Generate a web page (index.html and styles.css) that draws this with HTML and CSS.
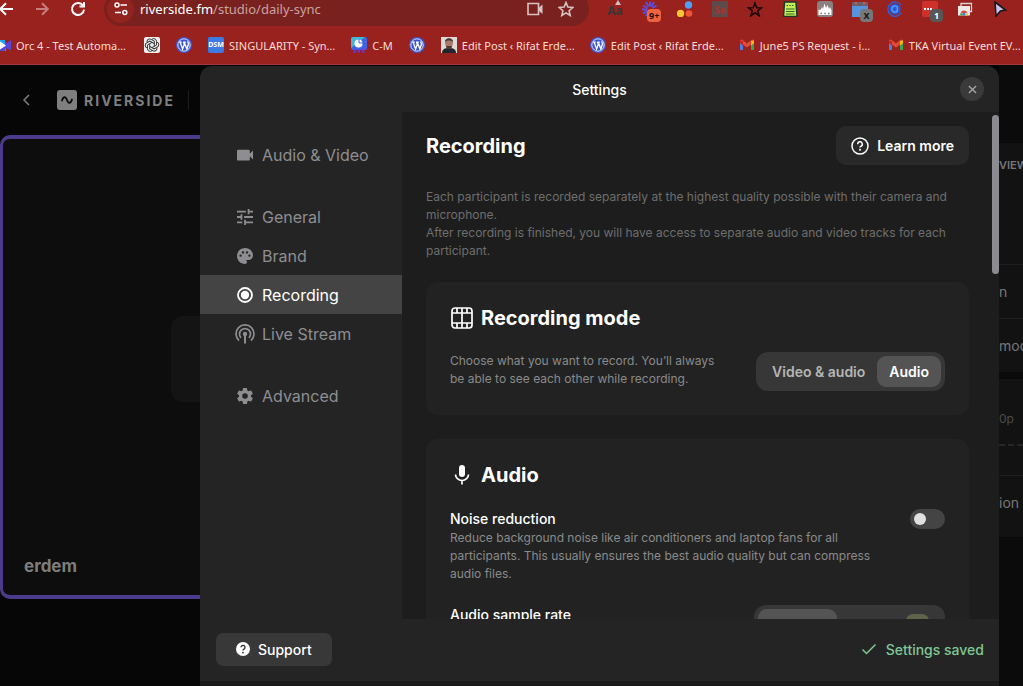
FILE: index.html
```html
<!DOCTYPE html>
<html lang="en">
<head>
<meta charset="utf-8">
<title>Riverside – Settings</title>
<meta name="viewport" content="width=device-width, initial-scale=1">
<link rel="stylesheet" href="styles.css">
</head>
<body>
<svg class="sprite" aria-hidden="true">
  <symbol id="wp" viewBox="0 0 16 16"><circle cx="8" cy="8" r="8" fill="#3d56cf"/><circle cx="8" cy="8" r="6.2" fill="none" stroke="#e8ecff" stroke-width=".9"/><path d="M3.2 5.2h2.6M4.2 5.4l2.4 6.6 1.7-4.8-.7-1.8M7 5.2h2.8M8.4 5.4l2.5 6.6 1.6-5c.2-1-.9-1.6-.8-2.5" fill="none" stroke="#fff" stroke-width="1.3"/></symbol>
  <symbol id="gmail" viewBox="0 0 16 16"><path d="M1 4.500V13h3V7z" fill="#4a7fe8"/><path d="M15 4.500V13h-3V7z" fill="#35a853"/><path d="M1 3l2-.4L8 6.600l5-4 2 .4-.3 2.500L8 10.400 1 5.500z" fill="#e5493a"/><path d="M1 3.500v2.800l3 2.200V4z" fill="#c5281f"/><path d="M12 4v4.500l3-2.200V3.400z" fill="#f8bb10"/></symbol>
  <symbol id="petal" viewBox="0 0 16 16"><path d="M8 2.300a2.700 2.700 0 0 1 4.500 2.200v3.600L8 10.600"/></symbol>
</svg>

<header class="chrome">
  <div class="toolbar">
    <nav class="history">
      <button type="button" aria-label="Back"><svg viewBox="0 0 16 16"><path d="M15 8H2.500M8 2.200L2.200 8 8 13.800" class="line"/></svg></button>
      <button type="button" aria-label="Forward" class="dim"><svg viewBox="0 0 16 16"><path d="M2 8h11.500M8 2.200L13.800 8 8 13.800" class="line"/></svg></button>
      <button type="button" aria-label="Reload"><svg viewBox="0 0 16 16"><path d="M13 4.600A6 6 0 1 0 14 8.600M14 1v4.500H9.500" class="line"/></svg></button>
    </nav>
    <div class="omnibox">
      <button type="button" class="site-info" aria-label="Site information"><svg viewBox="0 0 16 16"><path d="M7.500 4H14M2 11.500h6" class="line"/><circle cx="4" cy="4" r="2" class="line"/><circle cx="11.800" cy="11.500" r="2" class="line"/></svg></button>
      <a class="url" href="#">riverside.fm<span>/studio/daily-sync</span></a>
      <button type="button" aria-label="Camera"><svg viewBox="0 0 16 16"><path d="M1 2.500h10.500v11H1z" class="line thin"/><path d="M11.500 7l4-3.500v9.500l-4-3.500z" fill="currentColor"/></svg></button>
      <button type="button" aria-label="Bookmark"><svg viewBox="0 0 16 16"><path d="M8 1.500l1.900 4.600 4.900.4-3.700 3.200 1.100 4.800L8 11.900l-4.200 2.600 1.100-4.800L1.200 6.500l4.900-.4z" class="line thin"/></svg></button>
    </div>
    <div class="extensions">
      <button type="button" class="aa">Aa</button>
      <button type="button" aria-label="Updates"><svg viewBox="0 0 16 16"><path d="M8 5.500V.5M9.500 5.500L12 1M10.500 7l4-2.500M6.500 5.500L4 1M5.500 7L1 4.500M5.500 8.500H0M5.500 10l-4.500 2.500M6.500 11l-2.500 4" stroke="#5c51e6" stroke-width="1.800" fill="none"/></svg><span class="badge orange">9+</span></button>
      <button type="button" aria-label="Dots"><svg viewBox="0 0 16 16"><circle cx="11.500" cy="4" r="3.700" fill="#4ea0f5"/><circle cx="3.500" cy="12.500" r="3.700" fill="#f7c82e"/><circle cx="12" cy="12.500" r="3.300" fill="#ef5533"/></svg></button>
      <button type="button" class="se">Se</button>
      <button type="button" aria-label="Star"><svg viewBox="0 0 16 16"><path d="M8 2l1.700 4.700 5 .1-4 3 1.500 4.900L8 11.800l-4.200 2.900 1.500-4.900-4-3 5-.1z" fill="none" stroke="#140505" stroke-width="1.400"/></svg></button>
      <button type="button" aria-label="Notes"><svg viewBox="0 0 16 16"><path d="M2.500 1h11.500l1 14.500H1.500z" fill="#c7ec56" stroke="#17382a" stroke-width="1.500"/><path d="M4.500 4.500h1.500m1.200 0h1.500m1.200 0h1.500M4 8h8.500M4 10.500h8.500M4 13h8.500" stroke="#2c6a2c" stroke-width="1.200"/></svg></button>
      <button type="button" aria-label="Analytics"><svg viewBox="0 0 16 16"><rect width="16" height="16" rx="3" fill="#8b8080"/><path d="M1.500 10V8.500L3.500 9 5 6l1 2L7.500 2.500 9 7l1.500-3L12 8l1-2 1.500 3v5h-13z" fill="#fff"/><path d="M3.500 12.500H5M7.300 12.500h1.500M11 12.500h1.500" stroke="#777" stroke-width="1.500"/></svg></button>
      <button type="button" aria-label="Calendar"><svg viewBox="0 0 16 16"><path d="M0 1h16v4H0z" fill="#65606a"/><path d="M0 5h16v11H0z" fill="#5595dd"/><path d="M4 1v2.500M12 1v2.500" stroke="#c65b61" stroke-width="2"/></svg><span class="badge grey">X</span></button>
      <button type="button" aria-label="Clock"><svg viewBox="0 0 16 16"><path d="M14 4A7.200 7.200 0 1 0 14.500 11.500" fill="none" stroke="#2864e8" stroke-width="1.200"/><circle cx="8" cy="8" r="5.600" fill="#2a58d8"/><path d="M10.300 6A3.100 3.100 0 1 0 10.300 10z" fill="none" stroke="#56a6ff" stroke-width="1.300"/></svg></button>
      <button type="button" aria-label="Password manager"><svg viewBox="0 0 16 16"><rect width="16" height="16" rx="2" fill="#cf3029"/><path d="M2 8h8" stroke="#fff" stroke-width="2" stroke-dasharray="2 1"/></svg><span class="badge slate">1</span></button>
      <button type="button" aria-label="Web store"><svg viewBox="0 0 16 16"><path d="M4 2.500h10.500v8H4z" fill="none" stroke="#d5d5d5" stroke-width="1.300"/><path d="M1 5h12v9.500H1z" fill="#e9e9e9"/><path d="M3 14.500a4 4 0 0 1 1-3l3 2.500z" fill="#4caf50"/><path d="M3.500 11.500a4 4 0 0 1 7 0L7 12.500z" fill="#e4453a"/><path d="M10.500 11.500a4 4 0 0 1 .5 3H8z" fill="#f6c02c"/><circle cx="7" cy="13" r="1.500" fill="#3c7fe8"/></svg></button>
      <button type="button" aria-label="Cursor"><svg viewBox="0 0 16 16"><path d="M3 1l10.500 8-5 1L4 15z" fill="#c9c4ee" stroke="#17171c" stroke-width="1.600"/></svg></button>
    </div>
  </div>
  <nav class="bookmarks" aria-label="Bookmarks">
    <a href="#"><svg class="fav" viewBox="0 0 16 16"><path d="M0 3h10l1 11H2z" fill="#26a4ea"/><path d="M10 7l6-4v10l-6-2v3H2l2-4z" fill="#5647d8"/><path d="M5 4.500l6 4-6 4z" fill="#fff"/></svg><span class="wide">Orc 4 - Test Automa…</span></a>
    <a href="#" aria-label="ChatGPT"><svg class="fav" viewBox="0 0 16 16"><rect width="16" height="16" rx="2" fill="#eee"/><g fill="none" stroke="#272727" stroke-width=".9"><use href="#petal"/><use href="#petal" transform="rotate(60 8 8)"/><use href="#petal" transform="rotate(120 8 8)"/><use href="#petal" transform="rotate(180 8 8)"/><use href="#petal" transform="rotate(240 8 8)"/><use href="#petal" transform="rotate(300 8 8)"/></g></svg></a>
    <a href="#" aria-label="WordPress"><svg class="fav"><use href="#wp"/></svg></a>
    <a href="#"><span class="fav dsm">DSM</span><span>SINGULARITY - Syn…</span></a>
    <a href="#"><svg class="fav" viewBox="0 0 16 16"><rect width="16" height="13" rx="2" fill="#3f63e2"/><path d="M0 2a2 2 0 0 1 2-2h12L0 11z" fill="#42b8d8"/><path d="M5 12l-2 4M8 12v3.500M11 12l2 4" stroke="#6a35d8" stroke-width="2"/><circle cx="7.500" cy="6.500" r="4" fill="#fff"/><path d="M8 2v4h4" stroke="#3f63e2" fill="none"/></svg><span>C-M</span></a>
    <a href="#" aria-label="WordPress"><svg class="fav"><use href="#wp"/></svg></a>
    <a href="#"><svg class="fav" viewBox="0 0 16 16"><path d="M0 0h16v16H0z" fill="#dedad8"/><path d="M1 16c0-4 3-5 7-5s7 1 7 5z" fill="#25262d"/><path d="M4 5c0-5 8-5 8 0 0 4-2 7-4 7s-4-3-4-7z" fill="#a77a6a"/><path d="M4 5c0-5 8-5 8 0-2-2-6-2-8 0zM5 9h6c0 4-6 4-6 0z" fill="#4b3834"/></svg><span class="wide">Edit Post ‹ Rifat Erde…</span></a>
    <a href="#"><svg class="fav"><use href="#wp"/></svg><span class="wide">Edit Post ‹ Rifat Erde…</span></a>
    <a href="#"><svg class="fav"><use href="#gmail"/></svg><span class="wide">June5 PS Request - i…</span></a>
    <a href="#"><svg class="fav"><use href="#gmail"/></svg><span class="wide">TKA Virtual Event EV…</span></a>
  </nav>
</header>

<main class="studio">
  <section class="stage">
    <div class="brand-bar">
      <a href="#" aria-label="Back to dashboard"><svg class="chevron" viewBox="0 0 10 14"><path d="M8 2L3 7l5 5" class="line"/></svg></a>
      <svg class="mark" viewBox="0 0 20 20"><rect width="20" height="20" rx="3" fill="#7f7f7f"/><path d="M5 10.500c1.500-4.500 3.500-4.500 5-.5s3.500 4 5-.5" fill="none" stroke="#080808" stroke-width="1.800" stroke-linecap="round"/></svg>
      <span class="wordmark">RIVERSIDE</span>
      <span class="rule"></span>
    </div>
    <div class="tile">
      <div class="avatar"></div>
      <p class="name">erdem</p>
    </div>
  </section>
  <aside class="side">
    <div class="group">
      <h2>VIEW</h2>
      <p class="row">n</p>
      <p class="row">mod</p>
    </div>
    <div class="group">
      <p class="quality">0p</p>
      <p class="row">ion</p>
    </div>
  </aside>

  <div class="modal" role="dialog" aria-labelledby="modal-title">
    <header class="modal-head">
      <h1 id="modal-title">Settings</h1>
      <button type="button" class="close" aria-label="Close"><svg viewBox="0 0 10 10"><path d="M1 1l8 8M9 1L1 9" class="line"/></svg></button>
    </header>
    <div class="modal-body">
      <nav class="menu" aria-label="Settings sections">
        <div class="menu-group">
          <a href="#"><svg viewBox="2 2 20 20"><path d="M18 10.500V7a1.500 1.500 0 0 0-1.500-1.500h-13A1.500 1.500 0 0 0 2 7v10.500A1.500 1.500 0 0 0 3.500 19h13a1.500 1.500 0 0 0 1.500-1.500v-4l4 4v-11z"/></svg>Audio &amp; Video</a>
        </div>
        <div class="menu-group">
          <a href="#"><svg viewBox="0 0 18 18"><path d="M0 14v2h6v-2H0zM0 2v2h10V2H0zm10 16v-2h8v-2h-8v-2H8v6h2zM4 6v2H0v2h4v2h2V6H4zm14 4V8H8v2h10zm-6-4h2V4h4V2h-4V0h-2v6z"/></svg>General</a>
          <a href="#"><svg viewBox="2 2 20 20"><path d="M12 2C6.490 2 2 6.490 2 12s4.490 10 10 10c1.380 0 2.500-1.120 2.500-2.500 0-.61-.23-1.200-.64-1.670-.08-.1-.13-.21-.13-.33 0-.28.22-.5.5-.5H16c3.310 0 6-2.690 6-6 0-4.960-4.490-9-10-9zm-5.500 11a1.500 1.500 0 1 1 0-3 1.500 1.500 0 0 1 0 3zm3-4a1.500 1.500 0 1 1 0-3 1.500 1.500 0 0 1 0 3zm5 0a1.500 1.500 0 1 1 0-3 1.500 1.500 0 0 1 0 3zm3 4a1.500 1.500 0 1 1 0-3 1.500 1.500 0 0 1 0 3z"/></svg>Brand</a>
          <a href="#" class="current" aria-current="page"><svg viewBox="0 0 16 16"><circle cx="8" cy="8" r="7" fill="none" stroke="currentColor" stroke-width="1.800"/><circle cx="8" cy="8" r="4.200"/></svg>Recording</a>
          <a href="#"><svg class="large" viewBox="0 0 20 20"><g fill="none" stroke="currentColor" stroke-width="1.700"><path d="M4 16.600A9 9 0 1 1 16 16.600"/><path d="M6 13.800A5.500 5.500 0 1 1 14 13.800"/></g><circle cx="10" cy="10" r="2.200"/><path d="M9 10h2v9.500H9z"/></svg>Live Stream</a>
        </div>
        <div class="menu-group">
          <a href="#"><svg viewBox="2 2 20 20"><path d="M19.430 12.980c.04-.32.07-.64.07-.98s-.03-.66-.07-.98l2.110-1.650c.19-.15.24-.42.12-.64l-2-3.460c-.12-.22-.39-.3-.61-.22l-2.490 1c-.52-.4-1.080-.73-1.690-.98l-.38-2.650A.49.49 0 0 0 14 2h-4c-.25 0-.46.18-.49.42l-.38 2.650c-.61.25-1.170.59-1.690.98l-2.490-1c-.23-.09-.49 0-.61.22l-2 3.460c-.13.22-.07.49.12.64l2.110 1.650c-.04.32-.07.65-.07.98s.03.66.07.98l-2.110 1.650c-.19.15-.24.42-.12.64l2 3.460c.12.22.39.3.61.22l2.490-1c.52.4 1.080.73 1.690.98l.38 2.650c.03.24.24.42.49.42h4c.25 0 .46-.18.49-.42l.38-2.650c.61-.25 1.170-.59 1.690-.98l2.490 1c.23.09.49 0 .61-.22l2-3.460c.12-.22.07-.49-.12-.64l-2.110-1.650zM12 15.500a3.500 3.500 0 1 1 0-7 3.500 3.500 0 0 1 0 7z"/></svg>Advanced</a>
        </div>
      </nav>

      <section class="content">
        <div class="content-head">
          <h2>Recording</h2>
          <button type="button" class="learn"><svg viewBox="0 0 18 18"><circle cx="9" cy="9" r="8" class="line"/><path d="M6.700 7.200a2.300 2.300 0 1 1 3.300 2c-.7.300-1 .7-1 1.300" class="line"/><circle cx="9" cy="12.800" r="1" fill="currentColor"/></svg>Learn more</button>
        </div>
        <p class="intro">Each participant is recorded separately at the highest quality possible with their camera and microphone.<br>After recording is finished, you will have access to separate audio and video tracks for each participant.</p>

        <article class="card">
          <h3><svg viewBox="0 0 24 24"><g fill="none" stroke="currentColor" stroke-width="1.700"><rect x="2" y="2" width="20" height="20" rx="3"/><path d="M2 7h20M2 17h20M12 2v20M7 2v5M17 2v5M7 17v5M17 17v5"/></g></svg>Recording mode</h3>
          <div class="setting middle">
            <p class="narrow">Choose what you want to record. You’ll always be able to see each other while recording.</p>
            <div class="segmented" role="group" aria-label="Recording mode">
              <button type="button">Video &amp; audio</button>
              <button type="button" class="on" aria-pressed="true">Audio</button>
            </div>
          </div>
        </article>

        <article class="card">
          <h3><svg viewBox="0 0 24 24"><rect x="9" y="2" width="6" height="12" rx="3" fill="currentColor"/><path d="M5.500 11.500a6.500 6 0 0 0 13 0M12 17.500v4" fill="none" stroke="currentColor" stroke-width="1.700"/></svg>Audio</h3>
          <div class="setting">
            <div class="about">
              <label for="noise">Noise reduction</label>
              <p>Reduce background noise like air conditioners and laptop fans for all participants. This usually ensures the best audio quality but can compress audio files.</p>
            </div>
            <input type="checkbox" role="switch" id="noise" class="toggle">
          </div>
          <div class="setting">
            <h4>Audio sample rate</h4>
            <div class="segmented rate" role="group" aria-label="Audio sample rate">
              <button type="button" class="on" aria-label="Standard rate" aria-pressed="true"></button>
              <button type="button" aria-label="High rate"><span class="pill"></span></button>
            </div>
          </div>
        </article>
        <div class="thumb"></div>
      </section>
    </div>
    <footer class="modal-foot">
      <button type="button" class="support"><svg viewBox="0 0 14 14"><circle cx="7" cy="7" r="7" fill="#fff"/><path d="M5 5.300a2 2 0 1 1 3 1.800c-.7.400-1 .7-1 1.400" fill="none" stroke="#333" stroke-width="1.400"/><circle cx="7" cy="10.600" r=".9" fill="#333"/></svg>Support</button>
      <p class="saved" role="status"><svg viewBox="0 0 16 12"><path d="M1.500 6.500L5.500 10.500 14.500 1.500" class="line"/></svg>Settings saved</p>
    </footer>
  </div>
</main>
</body>
</html>
```
FILE: styles.css
```css
* { box-sizing: border-box; }

html, body { height: 100%; }

body {
  margin: 0;
  display: flex;
  flex-direction: column;
  overflow: hidden;
  background: #060606;
  color: #fff;
  font-family: Inter, "Liberation Sans", sans-serif;
  font-size: 14px;
}

h1, h2, h3, h4, p { margin: 0; }
a { color: inherit; text-decoration: none; }
button { border: 0; padding: 0; background: none; color: inherit; font: inherit; }
svg { display: block; flex: none; }
.sprite { position: absolute; width: 0; height: 0; }
.line { fill: none; stroke: currentColor; stroke-width: 1.5; }

/* Browser chrome */
.chrome {
  flex: none;
  background: #99221e;
  border-bottom: 1px solid #9f3a36;
  color: #f7dcd9;
  font-family: "Noto Sans", sans-serif;
  font-size: 11px;
  overflow: hidden;
}
.toolbar { display: flex; align-items: center; height: 34px; margin-top: -8px; }
.toolbar button { position: relative; flex: none; width: 16px; height: 16px; }
.toolbar svg { width: 16px; height: 16px; }
.history { display: flex; gap: 20px; padding-right: 18px; margin-left: -2px; color: #fff; }
.history .line { stroke-width: 2; }
.history .dim { color: #c67f7b; }
.omnibox {
  flex: 1;
  display: flex;
  align-items: center;
  gap: 15px;
  height: 34px;
  padding: 0 15px 0 3px;
  border-radius: 17px;
  background: #79211e;
  color: #d9c3c1;
}
.toolbar .site-info {
  display: grid;
  place-items: center;
  width: 27px;
  height: 27px;
  margin-right: -9px;
  border-radius: 50%;
  background: #92231f;
  color: #fff;
}
.url { flex: 1; font-size: 13px; color: #fff; }
.url span { color: #c9a3a1; }
.thin { stroke-width: 1.6; }
.extensions { display: flex; gap: 19px; padding: 0 15px 0 18px; }
.toolbar .se { background: #5b4c4b; color: #a8332d; font-weight: 700; font-size: 10px; line-height: 18px; }
.toolbar .aa { color: #3b3633; font-weight: 700; font-size: 12px; line-height: 20px; }
.aa::before {
  content: "";
  position: absolute;
  top: -1px;
  left: 8px;
  border: 3px solid transparent;
  border-top: 0;
  border-bottom: 5px solid #c9c3c0;
}
.badge {
  position: absolute;
  left: 8px;
  top: 8px;
  min-width: 13px;
  padding: 0 2px;
  border-radius: 4px;
  font-size: 9px;
  font-weight: 700;
  line-height: 13px;
  text-align: center;
}
.orange { left: 5px; background: #ef6440; color: #2b0f08; }
.grey { background: #777; color: #111; }
.slate { background: #575757; color: #fff; }

.bookmarks { display: flex; align-items: center; gap: 16px; height: 38px; margin-left: -5px; white-space: nowrap; }
.bookmarks a { display: flex; align-items: center; gap: 5px; flex: none; }
.wide { width: 112px; }
.fav { width: 16px; height: 16px; }
.dsm { border-radius: 2px; background: #3c7be4; color: #fff; font-size: 7px; font-weight: 700; line-height: 16px; text-align: center; }

/* Studio behind the dialog */
.studio { position: relative; flex: 1; min-height: 0; display: flex; }
.stage { flex: 1; display: flex; flex-direction: column; padding-bottom: 87px; }
.brand-bar { display: flex; align-items: center; height: 70px; padding-left: 21px; color: #7f7f7f; }
.chevron { width: 10px; height: 14px; margin-right: 26px; }
.mark { width: 20px; height: 20px; margin-right: 7px; }
.wordmark { font-size: 14px; font-weight: 700; letter-spacing: 2px; }
.rule { width: 1px; height: 20px; margin-left: 13px; background: #1c1c1c; }
.tile {
  flex: 1;
  display: grid;
  width: 43%;
  padding: 0 21px 17px;
  border: 4px solid #4c3b8c;
  border-left-width: 3px;
  border-radius: 10px;
  background: #0d0d0d;
}
.avatar, .name { grid-area: 1 / 1; }
.avatar { place-self: center; width: 86px; height: 86px; border-radius: 12px; background: #141414; }
.name { align-self: end; color: #7d7d7d; font-size: 17px; font-weight: 700; line-height: 24px; }

.side { width: 24px; padding-top: 78px; background: #0b0b0b; color: #777; white-space: nowrap; overflow: hidden; }
.group { margin-bottom: 7px; background: #121212; }
.side h2 { height: 121px; padding-top: 14px; font-size: 11px; font-weight: 600; line-height: 16px; }
.row { height: 54px; border-top: 1px solid #1e1e1e; line-height: 53px; }
.quality { height: 96px; padding-top: 32px; color: #4c4c4c; font-size: 12px; line-height: 16px; }
.quality::after { content: ""; display: block; margin-top: 17px; border-top: 2px dashed #262626; }
.quality + .row { height: 62px; }

/* Settings dialog */
.modal {
  position: absolute;
  inset: 1px 24px 0 200px;
  display: flex;
  flex-direction: column;
  overflow: hidden;
  border-radius: 12px 12px 0 0;
  border-bottom: 5px solid #1b1b1b;
  background: #242424;
}
.modal-head { display: grid; grid-template-columns: 24px 1fr 24px; align-items: center; flex: none; height: 46px; padding: 0 15px; }
.modal-head h1 { grid-column: 2; font-size: 14px; font-weight: 500; text-align: center; }
.close { display: grid; place-items: center; width: 24px; height: 24px; border-radius: 50%; background: #3a3a3a; color: #a5a5a5; }
.close svg { width: 9px; height: 9px; }
.modal-body { flex: 1; min-height: 0; display: flex; }

.menu { flex: none; width: 202px; display: flex; flex-direction: column; gap: 23px; padding-top: 23px; color: #8e8e92; font-size: 16px; }
.menu a { display: flex; align-items: center; gap: 9px; height: 39px; padding-left: 37px; }
.menu svg { width: 16px; height: 16px; fill: currentColor; }
.menu .large { width: 20px; height: 20px; margin: 0 -2px; }
.menu .current { background: #444; color: #fff; }

.content { position: relative; flex: 1; min-width: 0; padding: 14px 30px 0 24px; background: #1d1d1d; overflow: hidden; }
.content-head { display: flex; justify-content: space-between; align-items: center; }
.content h2, .content h3 { font-size: 20px; font-weight: 700; line-height: 24px; }
.learn { display: flex; align-items: center; gap: 8px; height: 39px; padding: 0 15px; border-radius: 10px; background: #292929; font-weight: 600; }
.learn svg { width: 18px; height: 18px; }
.intro { margin: 23px 0 22px; color: #6e6e6e; font-size: 12px; line-height: 18px; }

.card { margin-bottom: 24px; padding: 24px; border-radius: 12px; background: #222; }
.card h3 { display: flex; align-items: center; gap: 7px; margin-bottom: 22px; }
.card h3 svg { width: 24px; height: 24px; }
.card p { color: #8a8a8a; font-size: 12px; line-height: 18px; }
.setting { display: flex; justify-content: space-between; align-items: flex-start; margin-bottom: 22px; }
.middle { margin-bottom: 0; }
.narrow { width: 280px; }
.about { width: 436px; }
.about label, .card h4 { display: block; font-size: 14px; font-weight: 500; line-height: 20px; }

.segmented { display: flex; height: 39px; padding: 4px; border-radius: 12px; background: #373737; font-weight: 600; }
.segmented button { padding: 0 12px; border-radius: 9px; color: #b5b5b5; }
.segmented .on { background: #545454; color: #fff; }
.rate { width: 191px; }
.rate button { flex: 1; }
.rate .on { flex: none; width: 79px; }
.pill { display: block; width: 23px; height: 22px; margin-left: auto; border-radius: 7px; background: #60624a; }

.toggle { appearance: none; display: flex; align-items: center; width: 35px; height: 20px; margin: 0; padding: 0 4px; border-radius: 10px; background: #444; }
.toggle::before { content: ""; width: 12px; height: 12px; border-radius: 50%; background: #e0e0e0; }
.toggle:checked::before { margin-left: auto; }

.thumb { position: absolute; top: 3px; right: 0; width: 7px; height: 159px; border-radius: 4px; background: #8c8b91; }

.modal-foot { flex: none; display: flex; justify-content: space-between; align-items: center; height: 62px; padding: 0 15px 2px 16px; font-weight: 500; }
.support { display: flex; align-items: center; gap: 8px; height: 33px; padding: 0 20px; border-radius: 7px; background: #383838; font-weight: 500; }
.support svg { width: 14px; height: 14px; }
.saved { display: flex; align-items: center; gap: 9px; color: #7fc795; }
.saved svg { width: 16px; height: 12px; }
```
